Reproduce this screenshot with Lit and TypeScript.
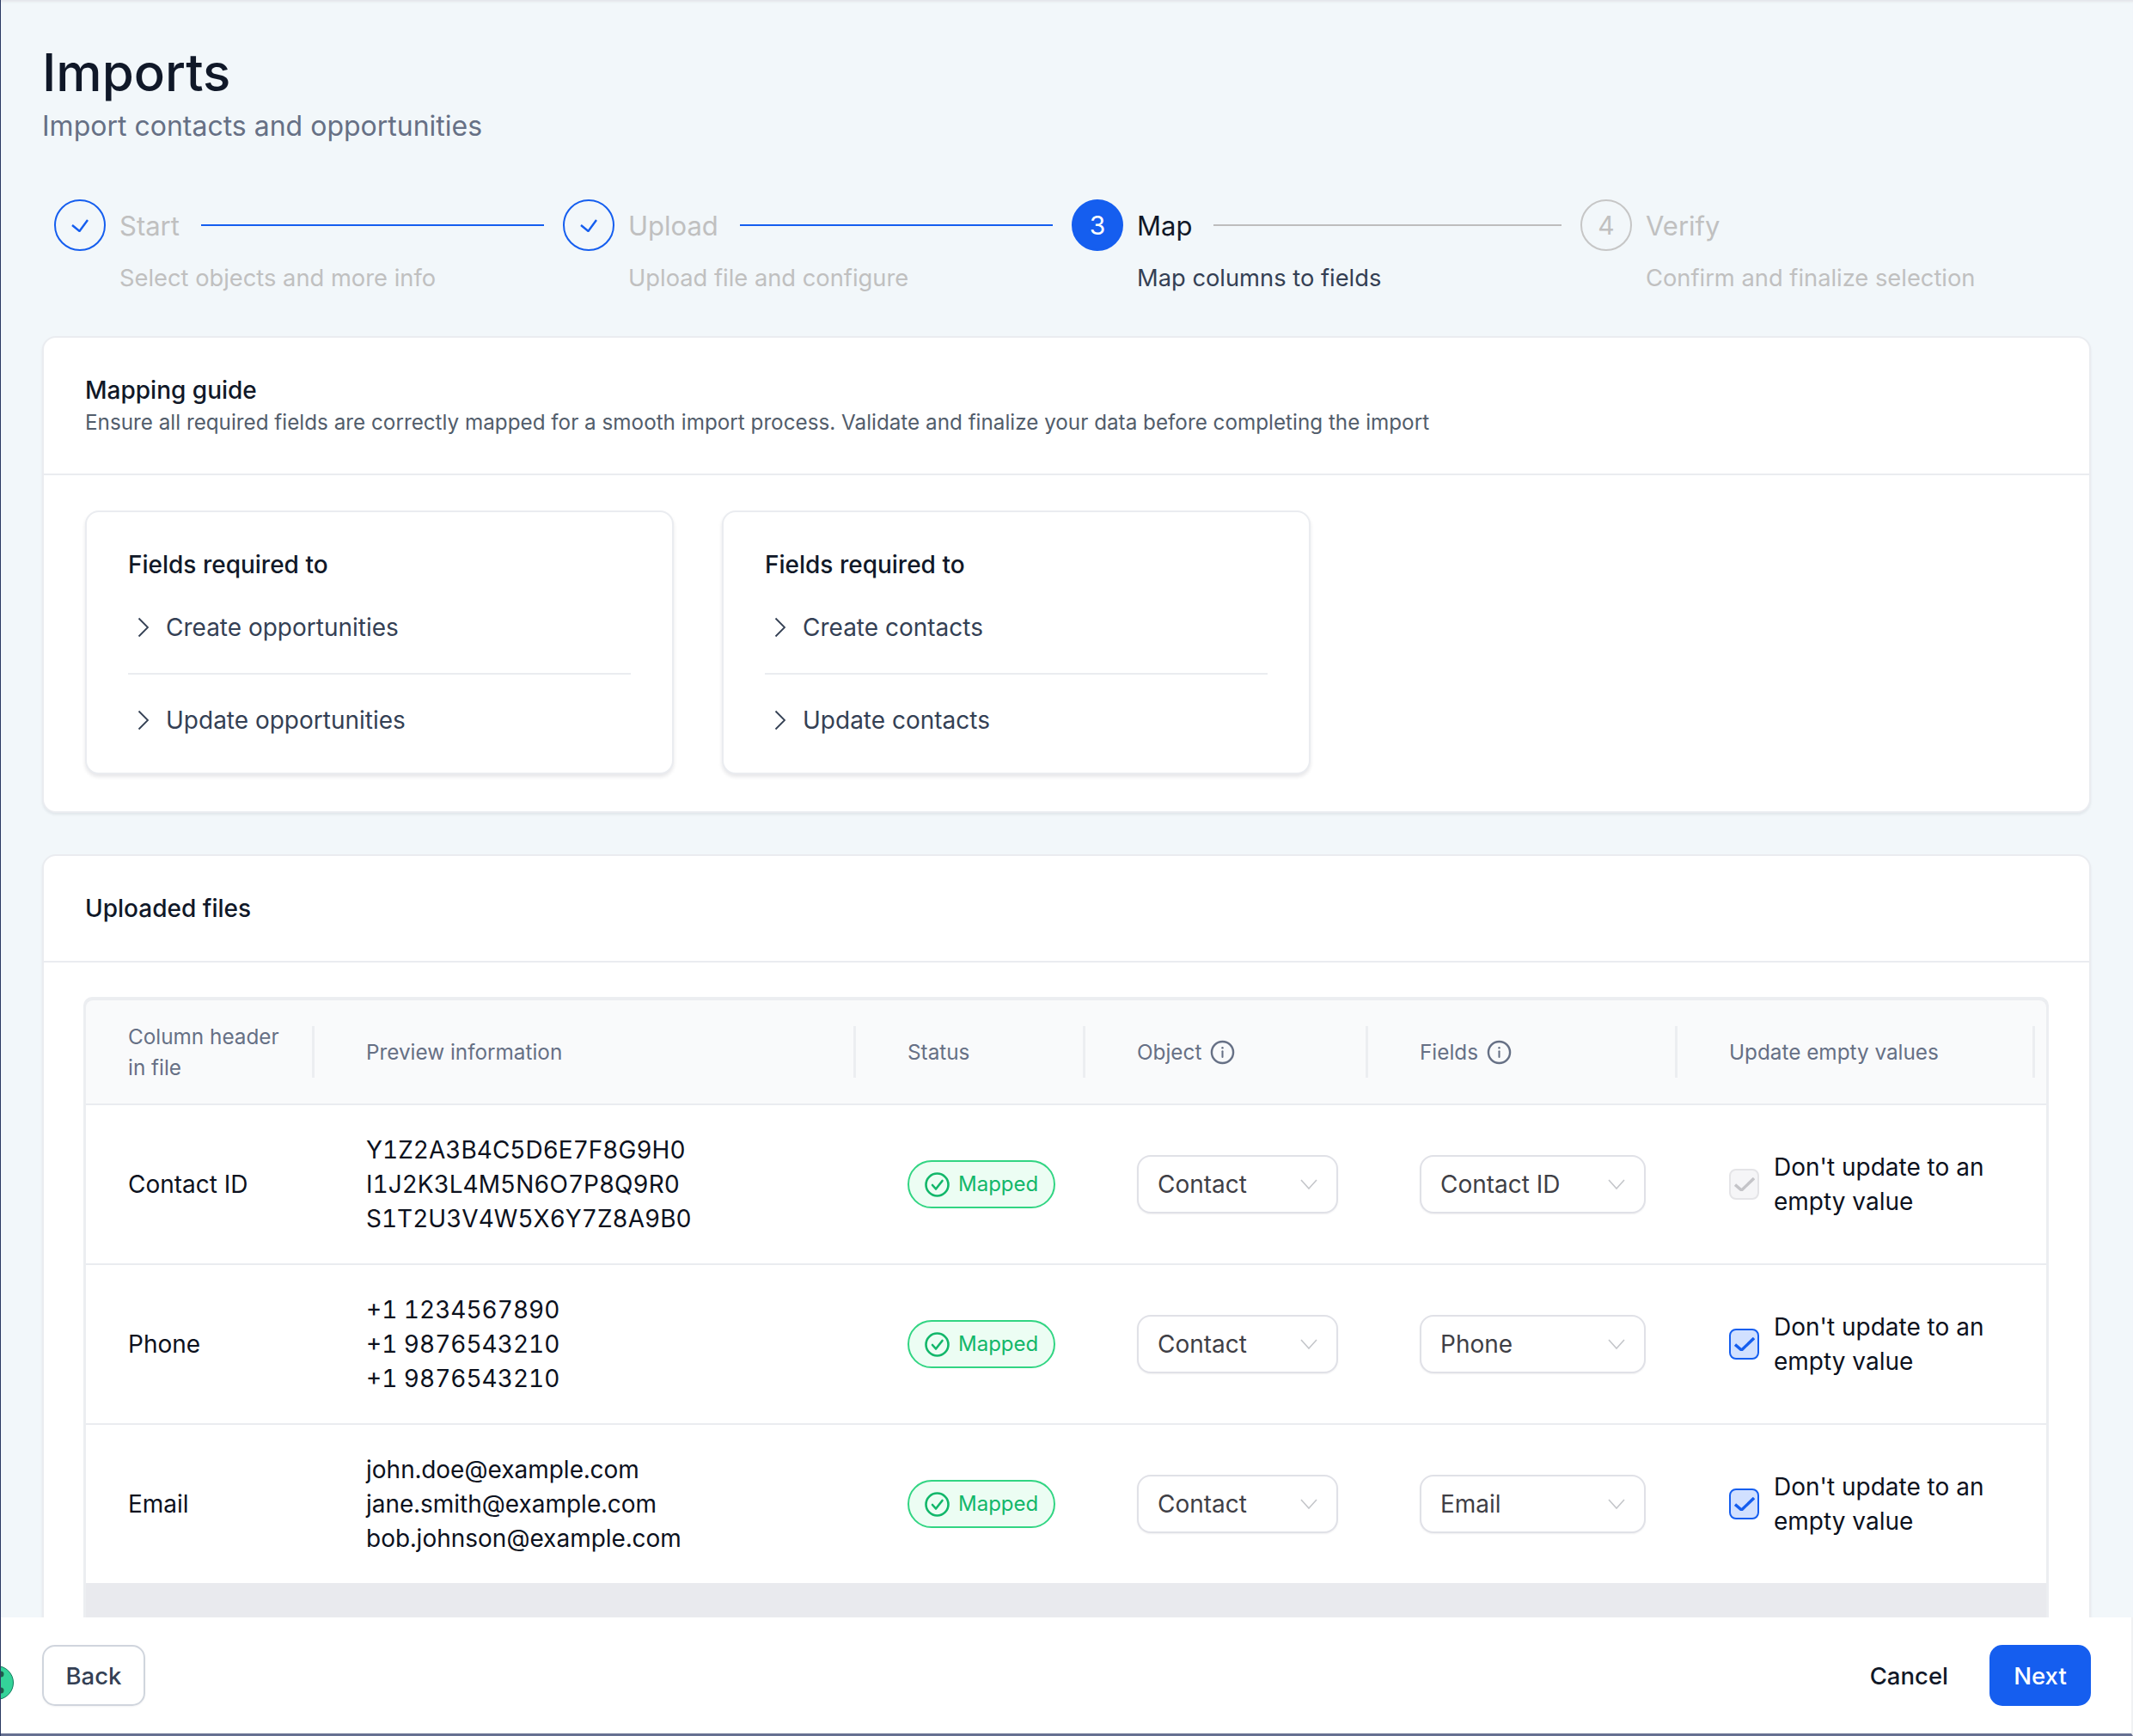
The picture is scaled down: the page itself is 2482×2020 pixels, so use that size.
import { LitElement, html, css } from 'lit';
import { customElement } from 'lit/decorators.js';

const steps = [
  { title: 'Start', sub: 'Select objects and more info', state: 'done', n: 1 },
  { title: 'Upload', sub: 'Upload file and configure', state: 'done', n: 2 },
  { title: 'Map', sub: 'Map columns to fields', state: 'active', n: 3 },
  { title: 'Verify', sub: 'Confirm and finalize selection', state: 'todo', n: 4 },
];

const guides = [
  ['Create opportunities', 'Update opportunities'],
  ['Create contacts', 'Update contacts'],
];

const rows = [
  {
    name: 'Contact ID',
    preview: ['Y1Z2A3B4C5D6E7F8G9H0', 'I1J2K3L4M5N6O7P8Q9R0', 'S1T2U3V4W5X6Y7Z8A9B0'],
    field: 'Contact ID',
    locked: true,
  },
  {
    name: 'Phone',
    preview: ['+1 1234567890', '+1 9876543210', '+1 9876543210'],
    field: 'Phone',
    locked: false,
  },
  {
    name: 'Email',
    preview: ['john.doe@example.com', 'jane.smith@example.com', 'bob.johnson@example.com'],
    field: 'Email',
    locked: false,
  },
];

const infoIcon = html`<svg class="info" viewBox="0 0 24 24" fill="none" stroke="currentColor" stroke-width="2">
  <circle cx="12" cy="12" r="10.4"></circle>
  <path d="M12 11v5.5" stroke-width="1.7" stroke-linecap="round"></path>
  <circle cx="12" cy="7.6" r="1" fill="currentColor" stroke="none"></circle>
</svg>`;

const chevronDown = html`<svg class="chev" viewBox="0 0 20 12" fill="none" stroke="currentColor" stroke-width="1.6">
  <path d="M1 1l9 10 9-10"></path>
</svg>`;

@customElement('app-root')
export class AppRoot extends LitElement {
  static styles = css`
    :host {
      display: flex;
      flex-direction: column;
      height: 100vh;
      overflow: hidden;
      background: #f2f7fa;
      border-left: 1px solid #2b3a63;
      font-family: Inter, 'Liberation Sans', sans-serif;
      color: #101828;
    }

    .content {
      flex: 1;
      min-height: 0;
      overflow: hidden;
      padding: 48px 49px 0 48px;
      box-shadow: inset 0 4px 3px -2px #e3e5e9;
    }

    h1 {
      margin: 0;
      font-size: 60px;
      line-height: 72px;
      font-weight: 500;
      color: #101828;
    }

    .subtitle {
      margin-top: 5px;
      font-size: 32px;
      line-height: 44px;
      color: #667085;
    }

    .stepper {
      display: flex;
      margin: 63px 2px 47px 14px;
    }

    .step {
      flex: 1;
      min-width: 0;
    }

    .step-top {
      display: flex;
      align-items: center;
      height: 60px;
    }

    .circle {
      flex: none;
      box-sizing: border-box;
      width: 60px;
      height: 60px;
      border-radius: 50%;
      border: 2px solid #155eef;
      display: flex;
      align-items: center;
      justify-content: center;
      font-size: 30px;
      color: #155eef;
    }

    .circle svg {
      width: 20px;
      height: 15px;
      fill: none;
      stroke: #155eef;
      stroke-width: 2.4;
    }

    .active .circle {
      background: #155eef;
      color: #fff;
    }

    .todo .circle {
      border-color: #c6c6c6;
      color: #c0c0c0;
    }

    .step-title {
      margin-left: 16px;
      padding-top: 2px;
      font-size: 31px;
      line-height: 40px;
      color: #c0c0c0;
    }

    .active .step-title {
      color: #101828;
    }

    .step-line {
      flex: 1;
      height: 2px;
      margin: 0 22px 0 25px;
      background: #155eef;
    }

    .active .step-line {
      background: #bdbdbd;
    }

    .step-sub {
      margin: 12px 0 0 76px;
      font-size: 27.3px;
      line-height: 40px;
      color: #c0c0c0;
    }

    .active .step-sub {
      color: #344054;
    }

    .card {
      background: #fff;
      border: 2px solid #eaecf0;
      border-radius: 16px;
      box-shadow: 0 2px 3px rgba(16, 24, 40, 0.07);
    }

    .card + .card {
      margin-top: 48px;
    }

    .card-head {
      padding: 41px 48px 41px;
      border-bottom: 2px solid #eaecf0;
    }

    .card-title {
      font-size: 28px;
      line-height: 40px;
      font-weight: 500;
      color: #101828;
    }

    .card-desc {
      font-size: 24.25px;
      line-height: 36px;
      color: #525d6b;
    }

    .guide-body {
      display: flex;
      gap: 56px;
      padding: 41px 48px 43px;
    }

    .guide {
      box-sizing: border-box;
      width: 685px;
      padding: 41px 48px 41px;
      background: #fff;
      border: 2px solid #eaecf0;
      border-radius: 16px;
      box-shadow: 0 3px 4px rgba(16, 24, 40, 0.1);
    }

    .guide-item {
      display: flex;
      align-items: center;
      gap: 14px;
      padding-left: 6px;
      font-size: 28px;
      line-height: 40px;
      color: #344054;
    }

    .guide-item svg {
      flex: none;
      width: 24px;
      height: 24px;
      fill: none;
      stroke: #344054;
      stroke-width: 1.8;
    }

    .guide-item.first {
      margin-top: 33px;
      padding-bottom: 33px;
      border-bottom: 2px solid #eaecf0;
    }

    .guide-item.last {
      margin-top: 33px;
    }

    .table-body {
      padding: 40px 47px 0 46px;
    }

    .table {
      border: 3px solid #eceef1;
      border-top-width: 4px;
      border-radius: 10px 10px 0 0;
      background: #e9eaee;
      padding-bottom: 120px;
    }

    .row {
      display: grid;
      grid-template-columns: 266px 630px 267px 329px 360px 416px 13px;
      align-items: center;
      background: #fff;
      box-sizing: border-box;
      border-bottom: 2px solid #eaecf0;
      padding: 32px 0;
    }

    .row:last-child {
      border-bottom: none;
    }

    .row.head {
      background: #f9fafb;
      padding: 30px 0;
      border-radius: 8px 8px 0 0;
    }

    .th {
      box-sizing: border-box;
      display: flex;
      align-items: center;
      gap: 10px;
      height: 60px;
      padding-left: 60px;
      border-right: 3px solid #eceef1;
      font-size: 24.3px;
      line-height: 36px;
      color: #667085;
    }

    .td {
      box-sizing: border-box;
      padding-left: 60px;
      font-size: 28px;
      line-height: 40px;
      color: #0c111d;
    }

    .th.first,
    .td.first {
      padding-left: 49px;
    }

    .preview {
      font-variant-numeric: tabular-nums;
      font-feature-settings: 'tnum' 1;
    }

    .info {
      flex: none;
      width: 29px;
      height: 29px;
    }

    .pill {
      box-sizing: border-box;
      display: inline-flex;
      align-items: center;
      gap: 10px;
      height: 56px;
      padding: 0 18px;
      border: 2px solid #32d583;
      border-radius: 28px;
      background: #ecfdf3;
      font-size: 24px;
      color: #12b76a;
      vertical-align: middle;
    }

    .pill svg {
      flex: none;
      width: 29px;
      height: 29px;
      fill: none;
      stroke: #12b76a;
      stroke-width: 2.6;
    }

    .select {
      box-sizing: border-box;
      display: flex;
      align-items: center;
      justify-content: space-between;
      height: 68px;
      padding: 0 22px;
      border: 2px solid #e0e1e7;
      border-radius: 16px;
      background: #fff;
      box-shadow: 0 1px 2px rgba(16, 24, 40, 0.06);
      color: #3f3f46;
    }

    .select.object {
      width: 234px;
    }

    .select.field {
      width: 263px;
    }

    .chev {
      flex: none;
      width: 20px;
      height: 12px;
      color: #c4c6ca;
    }

    .update {
      display: flex;
      align-items: center;
      gap: 17px;
    }

    .check {
      flex: none;
      box-sizing: border-box;
      width: 35px;
      height: 36px;
      border: 2px solid #155eef;
      border-radius: 8px;
      background: #d1e0ff;
      display: flex;
      align-items: center;
      justify-content: center;
    }

    .check svg {
      width: 24px;
      height: 16px;
      fill: none;
      stroke: #155eef;
      stroke-width: 3.4;
    }

    .check.locked {
      border-color: #e4e4e7;
      background: #f5f5f7;
    }

    .check.locked svg {
      stroke: #c4c4c8;
    }

    .footer {
      position: relative;
      flex: none;
      box-sizing: border-box;
      display: flex;
      align-items: center;
      justify-content: space-between;
      height: 138px;
      padding: 0 47px 0 48px;
      background: #fff;
      border-bottom: 3px solid #667091;
      border-right: 2px solid #f0f1f3;
      font-size: 27.5px;
      font-weight: 500;
    }

    .handle {
      position: absolute;
      left: -25px;
      top: 56px;
      width: 40px;
      height: 40px;
    }

    .btn {
      box-sizing: border-box;
      display: flex;
      align-items: center;
      justify-content: center;
      height: 71px;
      border-radius: 15px;
    }

    .back {
      width: 120px;
      border: 2px solid #d0d5dd;
      color: #344054;
      box-shadow: 0 1px 2px rgba(16, 24, 40, 0.05);
    }

    .right {
      display: flex;
      align-items: center;
      gap: 48px;
    }

    .cancel {
      color: #101828;
    }

    .next {
      width: 118px;
      background: #155eef;
      color: #fff;
    }
  `;

  renderStep(s: (typeof steps)[number], i: number) {
    return html`
      <div class="step ${s.state}">
        <div class="step-top">
          <div class="circle">
            ${s.state === 'done'
              ? html`<svg viewBox="0 0 20 15"><path d="M1 7l8.5 7L19 1"></path></svg>`
              : s.n}
          </div>
          <div class="step-title">${s.title}</div>
          ${i < steps.length - 1 ? html`<div class="step-line"></div>` : ''}
        </div>
        <div class="step-sub">${s.sub}</div>
      </div>
    `;
  }

  renderGuide(items: string[]) {
    const arrow = html`<svg viewBox="0 0 24 24"><path d="M6.5 1.5L17 12 6.5 22.5"></path></svg>`;
    return html`
      <div class="guide">
        <div class="card-title">Fields required to</div>
        <div class="guide-item first">${arrow}${items[0]}</div>
        <div class="guide-item last">${arrow}${items[1]}</div>
      </div>
    `;
  }

  renderRow(r: (typeof rows)[number]) {
    return html`
      <div class="row">
        <div class="td first">${r.name}</div>
        <div class="td preview">${r.preview.map((line) => html`<div>${line}</div>`)}</div>
        <div class="td">
          <span class="pill">
            <svg viewBox="0 0 29 29">
              <circle cx="14.5" cy="14.5" r="13"></circle>
              <path d="M9 15l4 4.5 7.5-9.5" stroke-linecap="round" stroke-linejoin="round"></path>
            </svg>
            Mapped
          </span>
        </div>
        <div class="td"><div class="select object">Contact ${chevronDown}</div></div>
        <div class="td"><div class="select field">${r.field} ${chevronDown}</div></div>
        <div class="td update">
          <div class="check ${r.locked ? 'locked' : ''}">
            <svg viewBox="0 0 24 16"><path d="M1 8.5L8.5 15 23 1"></path></svg>
          </div>
          <div>Don't update to an<br />empty value</div>
        </div>
      </div>
    `;
  }

  render() {
    return html`
      <div class="content">
        <h1>Imports</h1>
        <div class="subtitle">Import contacts and opportunities</div>

        <div class="stepper">${steps.map((s, i) => this.renderStep(s, i))}</div>

        <section class="card">
          <div class="card-head">
            <div class="card-title">Mapping guide</div>
            <div class="card-desc">
              Ensure all required fields are correctly mapped for a smooth import process. Validate and finalize your data before completing the import
            </div>
          </div>
          <div class="guide-body">${guides.map((g) => this.renderGuide(g))}</div>
        </section>

        <section class="card">
          <div class="card-head">
            <div class="card-title">Uploaded files</div>
          </div>
          <div class="table-body">
            <div class="table">
              <div class="row head">
                <div class="th first"><span>Column header<br />in file</span></div>
                <div class="th">Preview information</div>
                <div class="th">Status</div>
                <div class="th">Object ${infoIcon}</div>
                <div class="th">Fields ${infoIcon}</div>
                <div class="th">Update empty values</div>
              </div>
              ${rows.map((r) => this.renderRow(r))}
            </div>
          </div>
        </section>
      </div>

      <div class="footer">
        <svg class="handle" viewBox="0 0 40 40">
          <circle cx="20" cy="20" r="19.5" fill="#34d399" stroke="#0f7a5c"></circle>
          <circle cx="25" cy="10" r="3.5" fill="#1f5d4a"></circle>
          <circle cx="25" cy="29" r="3.5" fill="#1f5d4a"></circle>
        </svg>
        <div class="btn back">Back</div>
        <div class="right">
          <div class="cancel">Cancel</div>
          <div class="btn next">Next</div>
        </div>
      </div>
    `;
  }
}
